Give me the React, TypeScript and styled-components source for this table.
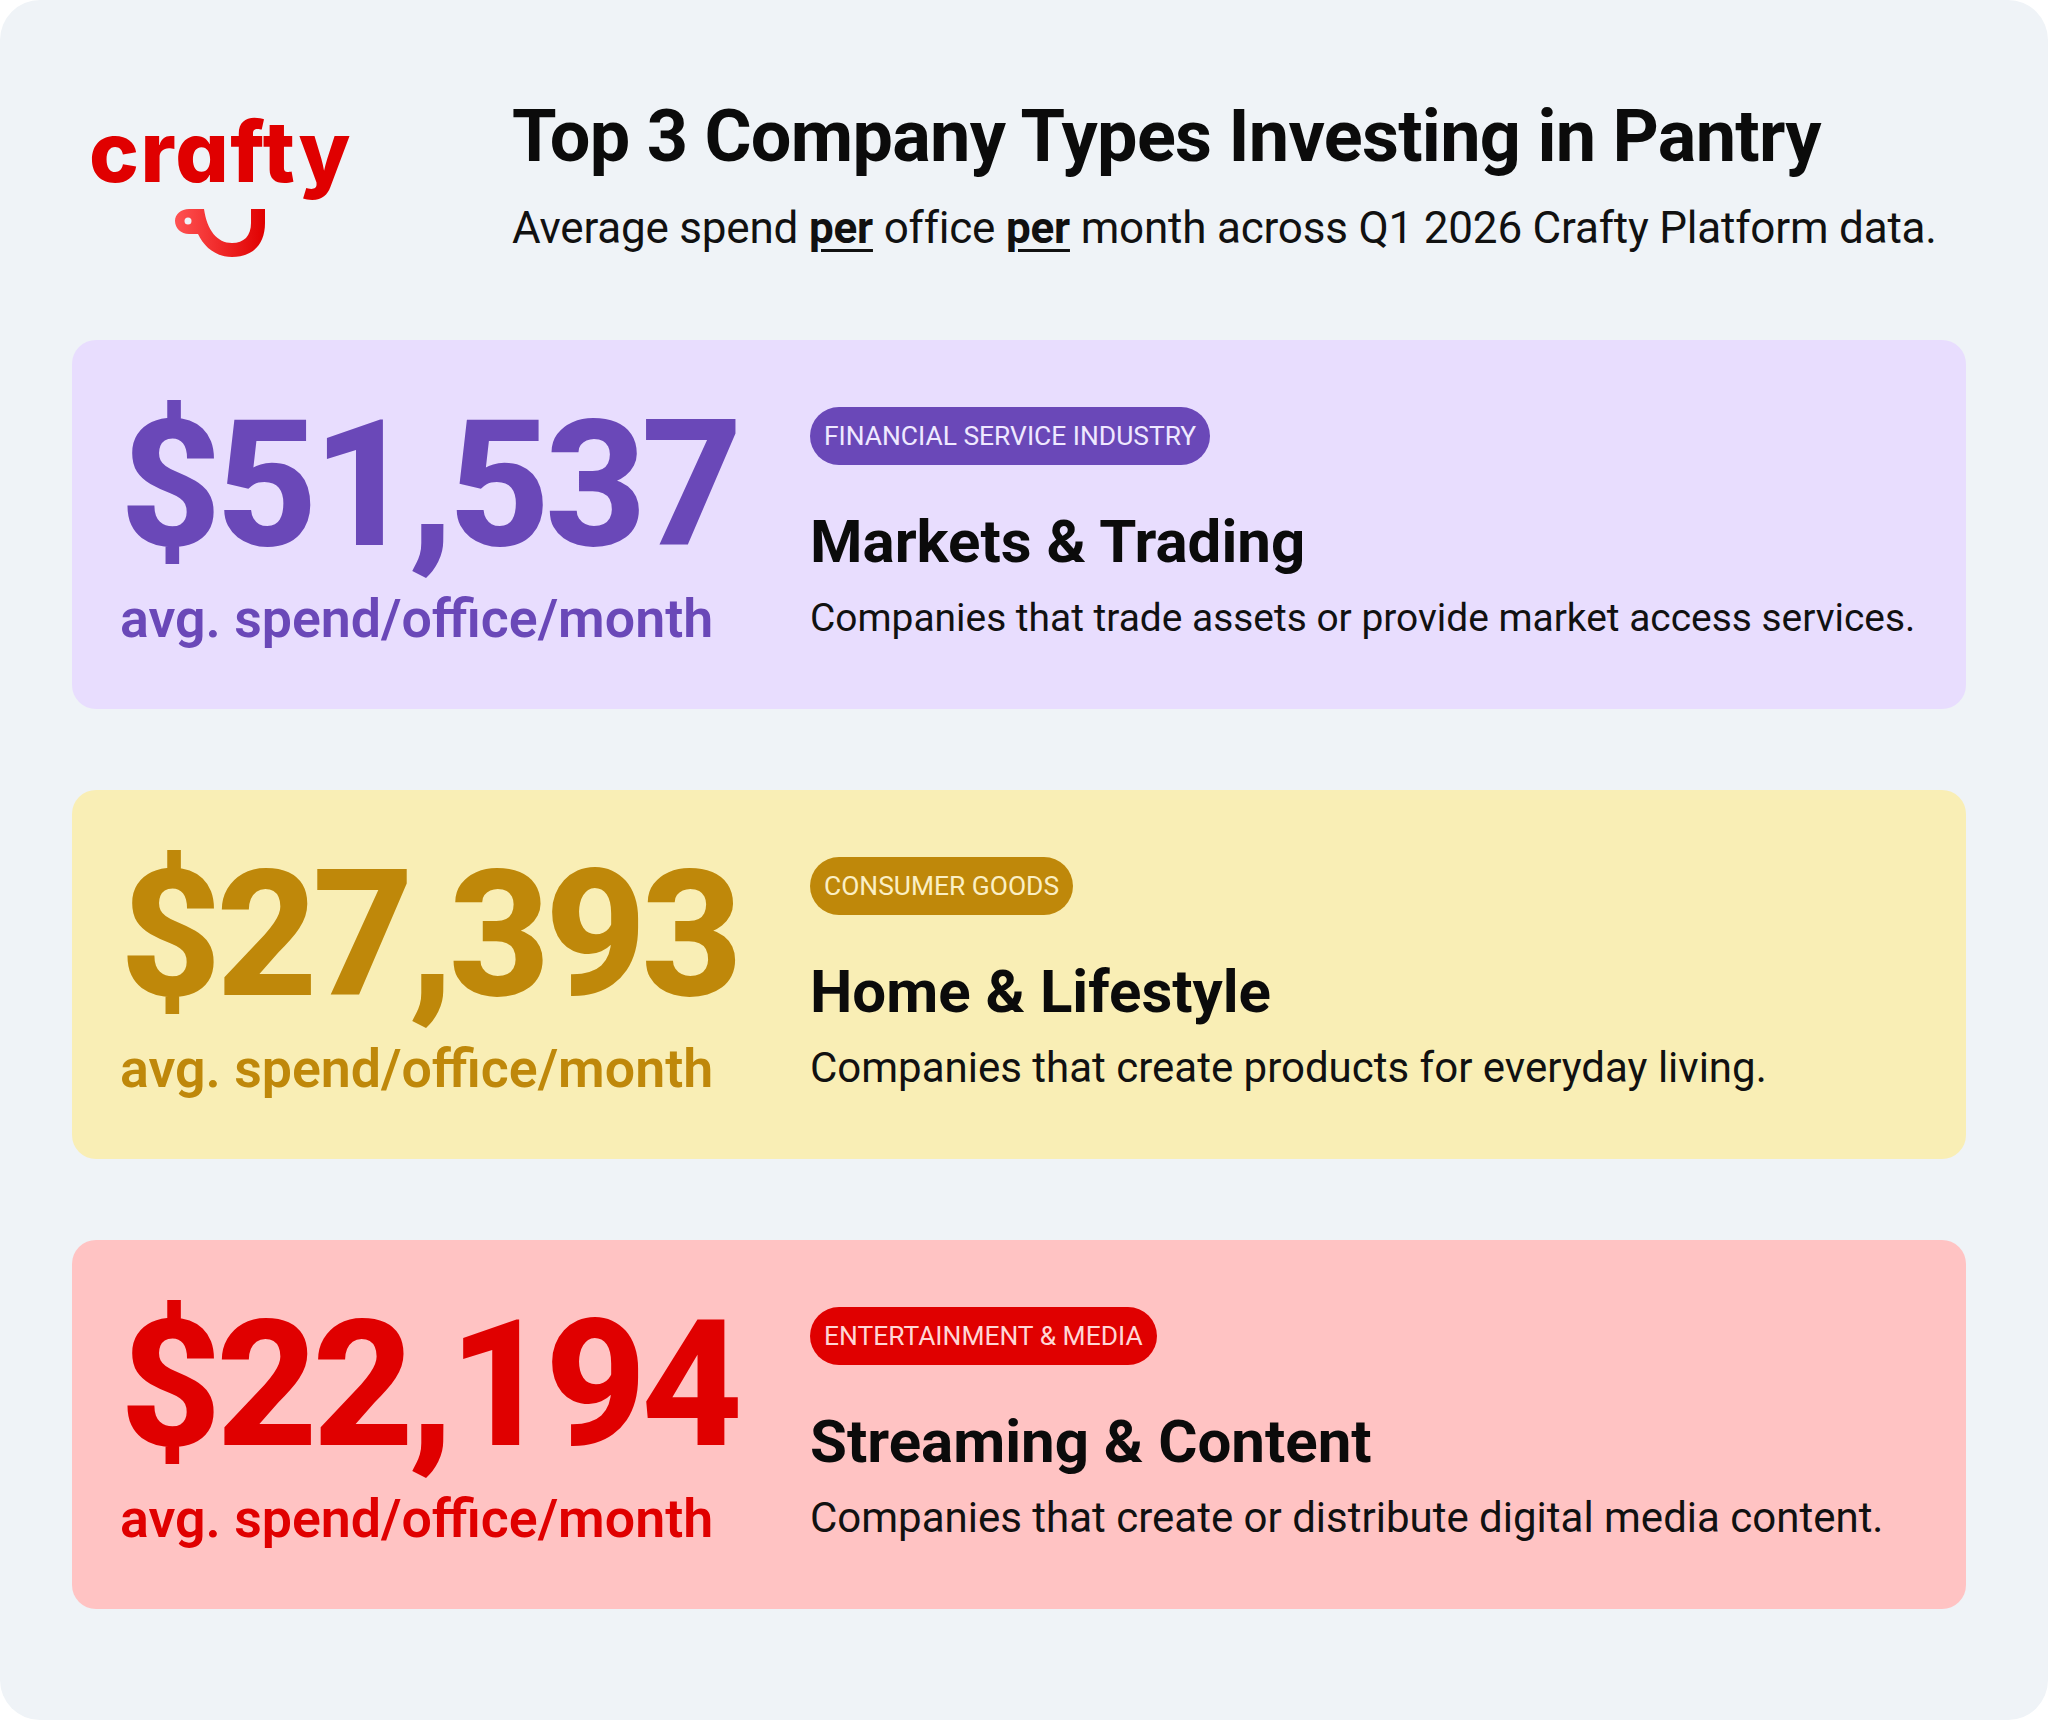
import React from "react";
import styled, { createGlobalStyle } from "styled-components";

const Global = createGlobalStyle`
  html, body { margin: 0; padding: 0; background: #ffffff; }
  body { font-family: Roboto, "Liberation Sans", sans-serif; }
  * { box-sizing: border-box; }
`;

const Page = styled.div`
  width: 2048px;
  height: 1720px;
  background: #eff3f7;
  border-radius: 40px;
  padding: 0 82px 0 72px;
  overflow: hidden;
`;

const Header = styled.header`
  display: flex;
  align-items: flex-start;
  height: 340px;
`;

const LogoBox = styled.div`
  width: 440px;
  padding: 110px 0 0 17px;
  display: flex;
  flex-direction: column;
`;

const LogoWord = styled.div`
  font-family: Inter, "Open Sans", sans-serif;
  font-weight: 800;
  font-size: 84px;
  line-height: 1;
  letter-spacing: 1.6px;
  font-feature-settings: "cv11" 1, "ss07" 1;
  color: #e00000;
`;

const Smile = styled.svg`
  margin: 11px 0 0 83px;
  display: block;
`;

const TitleBlock = styled.div`
  padding-top: 101px;
  display: flex;
  flex-direction: column;
  gap: 33px;
`;

const Title = styled.h1`
  margin: 0;
  font-family: Roboto, sans-serif;
  font-weight: 700;
  font-size: 72px;
  line-height: 1;
  letter-spacing: -0.01em;
  color: #0b0b0b;
`;

const Subtitle = styled.p`
  margin: 0;
  font-family: Roboto, sans-serif;
  font-weight: 400;
  font-size: 44px;
  line-height: 1;
  letter-spacing: -0.2px;
  color: #111;
  b {
    font-weight: 700;
    text-decoration: underline;
    text-underline-offset: 6px;
    text-decoration-thickness: 3px;
  }
`;

const Cards = styled.div`
  display: flex;
  flex-direction: column;
  gap: 81px;
`;

const Card = styled.section<{ $bg: string }>`
  height: 369px;
  background: ${(p) => p.$bg};
  border-radius: 24px;
  padding: 57px 40px 0 48px;
  display: grid;
  grid-template-columns: 690px 1fr;
  align-items: start;
`;

const LeftCol = styled.div<{ $fg: string }>`
  color: ${(p) => p.$fg};
  display: flex;
  flex-direction: column;
  gap: 19px;
`;

const Amount = styled.div`
  font-family: Roboto, sans-serif;
  font-weight: 800;
  font-size: 176px;
  line-height: 1;
  letter-spacing: -0.03em;
`;

const AmountLabel = styled.div`
  font-family: Roboto, sans-serif;
  font-weight: 600;
  font-size: 53.7px;
  line-height: 1;
`;

const RightCol = styled.div`
  padding-top: 10px;
  display: flex;
  flex-direction: column;
  align-items: flex-start;
`;

const Pill = styled.span<{ $bg: string; $fg: string }>`
  height: 58px;
  display: inline-flex;
  align-items: center;
  padding: 0 14px;
  border-radius: 29px;
  background: ${(p) => p.$bg};
  color: ${(p) => p.$fg};
  font-family: Roboto, sans-serif;
  font-weight: 400;
  font-size: 26.4px;
  text-transform: uppercase;
`;

const Heading = styled.h2`
  margin: 47px 0 0;
  font-family: Roboto, sans-serif;
  font-weight: 700;
  font-size: 60px;
  line-height: 1;
  color: #0b0b0b;
`;

const Desc = styled.p<{ $size: number }>`
  margin: 27px 0 0;
  font-family: Roboto, sans-serif;
  font-weight: 400;
  font-size: ${(p) => p.$size}px;
  line-height: 38px;
  color: #111;
`;

type Item = {
  amount: string;
  tag: string;
  heading: string;
  desc: string;
  descSize: number;
  bg: string;
  fg: string;
  pillFg: string;
};

const items: Item[] = [
  {
    amount: "$51,537",
    tag: "Financial Service Industry",
    heading: "Markets & Trading",
    desc: "Companies that trade assets or provide market access services.",
    descSize: 38.9,
    bg: "#e8ddfe",
    fg: "#6a48b8",
    pillFg: "#efe8ff",
  },
  {
    amount: "$27,393",
    tag: "Consumer Goods",
    heading: "Home & Lifestyle",
    desc: "Companies that create products for everyday living.",
    descSize: 42,
    bg: "#f9eeb5",
    fg: "#bf880a",
    pillFg: "#fbefc4",
  },
  {
    amount: "$22,194",
    tag: "Entertainment & Media",
    heading: "Streaming & Content",
    desc: "Companies that create or distribute digital media content.",
    descSize: 42,
    bg: "#ffc3c3",
    fg: "#e00000",
    pillFg: "#ffd6d6",
  },
];

export default function App() {
  return (
    <>
      <Global />
      <Page>
        <Header>
          <LogoBox>
            <LogoWord>crafty</LogoWord>
            <Smile width="100" height="56" viewBox="0 0 100 56">
              <defs>
                <linearGradient id="smileGrad" x1="0" y1="0" x2="1" y2="0">
                  <stop offset="0" stopColor="#ff5252" />
                  <stop offset="1" stopColor="#e00000" />
                </linearGradient>
              </defs>
              <path
                fill="url(#smileGrad)"
                d="M79 4 H93 V18 C93 40 80 52 60 52 C44 52 32 42 26 29 L17 29 C9 29 3 23 3 16 C3 9 9 4 17 4 L32 4 C35 25 45 38 60 38 C72 38 79 31 79 18 Z"
              />
              <circle cx="16" cy="16" r="3.5" fill="#eff3f7" />
            </Smile>
          </LogoBox>
          <TitleBlock>
            <Title>Top 3 Company Types Investing in Pantry</Title>
            <Subtitle>
              Average spend <b>per</b> office <b>per</b> month across Q1 2026 Crafty Platform data.
            </Subtitle>
          </TitleBlock>
        </Header>
        <Cards>
          {items.map((it) => (
            <Card key={it.amount} $bg={it.bg}>
              <LeftCol $fg={it.fg}>
                <Amount>{it.amount}</Amount>
                <AmountLabel>avg. spend/office/month</AmountLabel>
              </LeftCol>
              <RightCol>
                <Pill $bg={it.fg} $fg={it.pillFg}>
                  {it.tag}
                </Pill>
                <Heading>{it.heading}</Heading>
                <Desc $size={it.descSize}>{it.desc}</Desc>
              </RightCol>
            </Card>
          ))}
        </Cards>
      </Page>
    </>
  );
}
